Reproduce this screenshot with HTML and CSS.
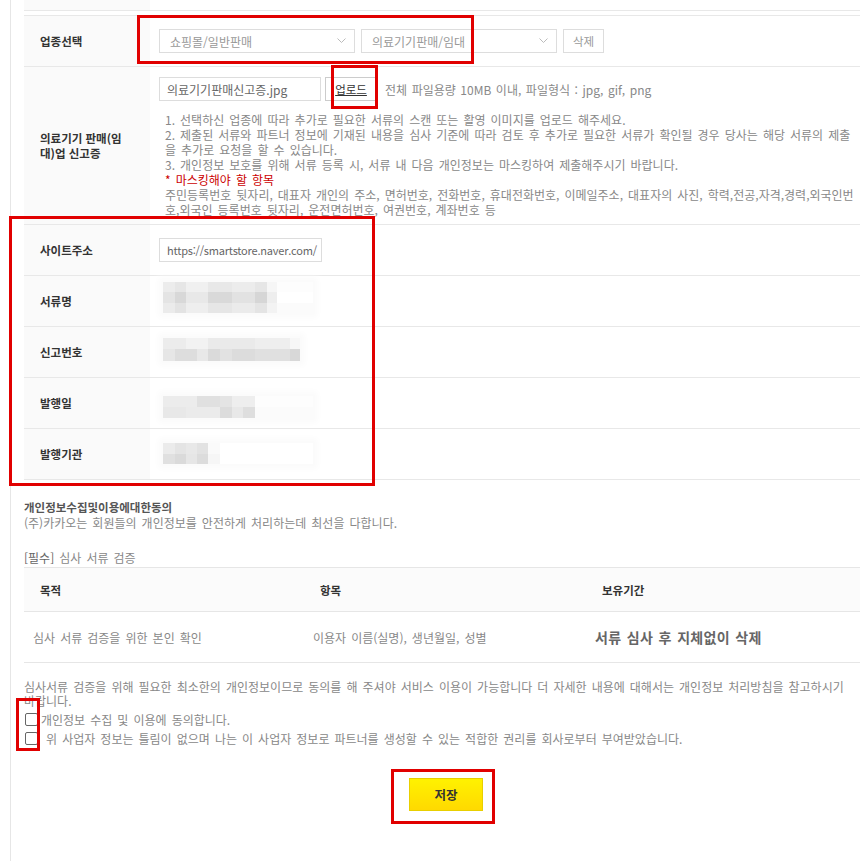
FILE: index.html
```html
<!DOCTYPE html>
<html lang="ko">
<head>
    <meta charset="UTF-8">
    <meta name="viewport" content="width=device-width, initial-scale=1.0">
    <title>서류 등록</title>
    <link rel="stylesheet" href="styles.css">
</head>
<body>
<div class="page">
    <div class="wrap">
        <div class="row row-cut"><div class="th"></div><div class="td"></div></div>

        <div class="form">
            <div class="row">
                <div class="th">업종선택</div>
                <div class="td">
                    <div class="select">
                        <span>쇼핑몰/일반판매</span>
                        <svg width="9" height="6" viewBox="0 0 9 6"><polyline points="0.5,0.5 4.5,4.5 8.5,0.5" fill="none" stroke="#bbb" stroke-width="1"/></svg>
                    </div>
                    <div class="select">
                        <span>의료기기판매/임대</span>
                        <svg width="9" height="6" viewBox="0 0 9 6"><polyline points="0.5,0.5 4.5,4.5 8.5,0.5" fill="none" stroke="#bbb" stroke-width="1"/></svg>
                    </div>
                    <button class="btn btn-del">삭제</button>
                </div>
            </div>

            <div class="row">
                <div class="th">의료기기 판매(임대)업 신고증</div>
                <div class="td td-doc">
                    <div class="file-line">
                        <div class="field field-file">의료기기판매신고증.jpg</div>
                        <button class="btn btn-upload">업로드</button>
                        <span class="hint">전체 파일용량 10MB 이내, 파일형식 : jpg, gif, png</span>
                    </div>
                    <div class="guide">
                        <p>1. 선택하신 업종에 따라 추가로 필요한 서류의 스캔 또는 활영 이미지를 업로드 해주세요.</p>
                        <p>2. 제출된 서류와 파트너 정보에 기재된 내용을 심사 기준에 따라 검토 후 추가로 필요한 서류가 확인될 경우 당사는 해당 서류의 제출을 추가로 요청을 할 수 있습니다.</p>
                        <p>3. 개인정보 보호를 위해 서류 등록 시, 서류 내 다음 개인정보는 마스킹하여 제출해주시기 바랍니다.</p>
                        <p class="warn">* 마스킹해야 할 항목</p>
                        <p>주민등록번호 뒷자리, 대표자 개인의 주소, 면허번호, 전화번호, 휴대전화번호, 이메일주소, 대표자의 사진, 학력,전공,자격,경력,외국인번호,외국인 등록번호 뒷자리, 운전면허번호, 여권번호, 계좌번호 등</p>
                    </div>
                </div>
            </div>

            <div class="row">
                <div class="th">사이트주소</div>
                <div class="td">
                    <div class="field field-url">https://smartstore.naver.com/</div>
                </div>
            </div>

            <div class="row">
                <div class="th">서류명</div>
                <div class="td">
                    <div class="mosaic mz-name">
                        <div class="band b1"></div>
                        <div class="band b2"></div>
                        <div class="band b3"></div>
                    </div>
                </div>
            </div>

            <div class="row">
                <div class="th">신고번호</div>
                <div class="td">
                    <div class="mosaic mz-num">
                        <div class="band b1"></div>
                        <div class="band b2"></div>
                    </div>
                </div>
            </div>

            <div class="row">
                <div class="th">발행일</div>
                <div class="td">
                    <div class="mosaic mz-date">
                        <div class="band b1"></div>
                        <div class="band b2"></div>
                    </div>
                </div>
            </div>

            <div class="row">
                <div class="th">발행기관</div>
                <div class="td">
                    <div class="mosaic mz-org">
                        <div class="band b1"></div>
                        <div class="band b2"></div>
                    </div>
                </div>
            </div>
        </div>

        <div class="consent">
            <p class="consent-title">개인정보수집및이용에대한동의</p>
            <p class="consent-desc">(주)카카오는 회원들의 개인정보를 안전하게 처리하는데 최선을 다합니다.</p>
            <p class="consent-sub"><span>[필수]</span> 심사 서류 검증</p>

            <table class="terms">
                <thead>
                    <tr>
                        <th class="c1">목적</th>
                        <th class="c2">항목</th>
                        <th>보유기간</th>
                    </tr>
                </thead>
                <tbody>
                    <tr>
                        <td>심사 서류 검증을 위한 본인 확인</td>
                        <td>이용자 이름(실명), 생년월일, 성별</td>
                        <td class="keep">서류 심사 후 지체없이 삭제</td>
                    </tr>
                </tbody>
            </table>

            <p class="notice">심사서류 검증을 위해 필요한 최소한의 개인정보이므로 동의를 해 주셔야 서비스 이용이 가능합니다 더 자세한 내용에 대해서는 개인정보 처리방침을 참고하시기 바랍니다.</p>
            <label class="agree"><input type="checkbox">개인정보 수집 및 이용에 동의합니다.</label>
            <label class="agree"><input type="checkbox"> 위 사업자 정보는 틀림이 없으며 나는 이 사업자 정보로 파트너를 생성할 수 있는 적합한 권리를 회사로부터 부여받았습니다.</label>
        </div>

        <div class="actions">
            <button class="btn-save">저장</button>
        </div>
    </div>

    <!-- annotation boxes -->
    <div class="mark mark-type"></div>
    <div class="mark mark-upload"></div>
    <div class="mark mark-info"></div>
    <div class="mark mark-check"></div>
    <div class="mark mark-save"></div>
</div>
</body>
</html>
```

FILE: styles.css
```css
* {
    margin: 0;
    padding: 0;
    box-sizing: border-box;
}

body {
    font-family: "Noto Sans CJK KR", "Noto Sans", sans-serif;
    font-size: 12px;
    word-spacing: 1.7px;
    color: #888;
    background-color: #fff;
    overflow-x: hidden;
}

.page {
    position: relative;
    width: 868px;
    min-height: 861px;
}

.wrap {
    margin-left: 10px;
    width: 858px;
    min-height: 861px;
    border-left: 1px solid #e6e6e6;
    padding-left: 13px;
}

/* form rows */
.row {
    display: flex;
    min-height: 51px;
    border-bottom: 1px solid #e8e8e8;
}

.row-cut {
    min-height: 11px;
    height: 11px;
}

.form {
    margin-top: 4px;
    border-top: 1px solid #e8e8e8;
}

.th {
    flex: none;
    width: 126px;
    padding: 0 16px;
    background-color: #fafafa;
    display: flex;
    align-items: center;
    font-size: 11.5px;
    font-weight: bold;
    color: #333;
    line-height: 15px;
    word-spacing: 0;
}

.td {
    flex: 1;
    display: flex;
    align-items: center;
    gap: 6px;
    padding: 0 12px 0 9px;
}

.select {
    width: 196px;
    height: 24px;
    border: 1px solid #ddd;
    display: flex;
    align-items: center;
    justify-content: space-between;
    padding: 0 8px 0 10px;
    color: #999;
    word-spacing: 0;
}

.btn {
    height: 24px;
    background: #fff;
    border: 1px solid #ddd;
    font-family: inherit;
    font-size: 11.5px;
    color: #999;
    padding: 0 9px;
}

.field {
    height: 24px;
    border: 1px solid #ddd;
    display: flex;
    align-items: center;
    padding: 0 7px;
    color: #666;
    white-space: nowrap;
    overflow: hidden;
}

.field-file {
    width: 162px;
    word-spacing: 0;
}

.field-url {
    width: 163px;
    padding: 0 4px 0 7px;
    font-size: 11px;
    letter-spacing: -0.2px;
    word-spacing: 0;
}

/* document row */
.td-doc {
    display: block;
    padding-top: 10px;
    padding-bottom: 7px;
}

.file-line {
    display: flex;
    align-items: center;
}

.btn-upload {
    margin-left: 4px;
    width: 52px;
    padding: 0;
    border-color: #ccc;
    color: #333;
    text-decoration: underline;
}

.hint {
    margin-left: 8px;
    word-spacing: 1.2px;
}

.guide {
    margin-top: 11px;
    padding-left: 6px;
    line-height: 15px;
}

.guide .warn {
    color: #c00;
}

/* blurred values */
.mosaic {
    margin-left: 4px;
    background-color: #fbfbfb;
    box-shadow: 0 0 6px 5px #fbfbfb;
    filter: blur(0.5px);
}

.band {
    height: 11px;
}

.mz-name {
    width: 150px;
    margin-top: -7px;
}

.mz-name .b1 {
    height: 10px;
    background: linear-gradient(90deg, #ececec 0 12px, #e6e6e6 12px 23px, #f0f0f0 23px 45px, #e8e8e8 45px 69px, #ececec 69px 92px, #e6e6e6 92px 104px, #f6f6f6 104px 114px, #fdfdfd 114px 150px);
}

.mz-name .b2 {
    background: linear-gradient(90deg, #e4e4e4 0 12px, #d8d8d8 12px 23px, #e8e8e8 23px 45px, #d9d9d9 45px 69px, #e2e2e2 69px 92px, #d6d6d6 92px 104px, #eeeeee 104px 114px, #fff 114px 150px);
}

.mz-name .b3 {
    height: 10px;
    background: linear-gradient(90deg, #ebebeb 0 12px, #e3e3e3 12px 23px, #eeeeee 23px 45px, #e6e6e6 45px 69px, #ebebeb 69px 92px, #e4e4e4 92px 104px, #f3f3f3 104px 114px, #fbfbfb 114px 150px);
}

.mz-num {
    width: 137px;
    margin-top: -6px;
}

.mz-num .b1 {
    background: linear-gradient(90deg, #ececec 0 23px, #f2f2f2 23px 45px, #eaeaea 45px 92px, #eeeeee 92px 127px, #f7f7f7 127px 137px);
}

.mz-num .b2 {
    height: 12px;
    background: linear-gradient(90deg, #e6e6e6 0 12px, #dddddd 12px 34px, #e8e8e8 34px 45px, #dadada 45px 57px, #e2e2e2 57px 69px, #dcdcdc 69px 92px, #e0e0e0 92px 127px, #d8d8d8 127px 137px);
}

.mz-date {
    width: 150px;
    margin-top: 7px;
}

.mz-date .b1 {
    background: linear-gradient(90deg, #ececec 0 34px, #e0e0e0 34px 57px, #e4e4e4 57px 69px, #eeeeee 69px 92px, #fdfdfd 92px 150px);
}

.mz-date .b2 {
    background: linear-gradient(90deg, #e8e8e8 0 23px, #ebebeb 23px 57px, #dcdcdc 57px 69px, #e8e8e8 69px 80px, #dedede 80px 92px, #fbfbfb 92px 150px);
}

.mz-org {
    width: 150px;
    margin-top: -2px;
}

.mz-org .b1 {
    background: linear-gradient(90deg, #ebebeb 0 12px, #e4e4e4 12px 23px, #e8e8e8 23px 34px, #e2e2e2 34px 45px, #fafafa 45px 57px, #fff 57px 150px);
}

.mz-org .b2 {
    height: 10px;
    background: linear-gradient(90deg, #e0e0e0 0 12px, #dadada 12px 23px, #e6e6e6 23px 34px, #dcdcdc 34px 45px, #f6f6f6 45px 57px, #fff 57px 150px);
}

/* consent */
.consent-title {
    margin-top: 19px;
    line-height: 16px;
    font-size: 11.5px;
    font-weight: bold;
    color: #555;
    word-spacing: 0;
}

.consent-desc {
    line-height: 16px;
}

.consent-sub {
    margin-top: 19px;
    margin-bottom: 1px;
    line-height: 16px;
    color: #888;
}

.consent-sub span {
    color: #666;
}

.terms {
    width: 100%;
    border-collapse: collapse;
    border-top: 1px solid #e6e6e6;
    text-align: left;
}

.terms th {
    height: 44px;
    padding-left: 16px;
    background-color: #fbfbfb;
    border-bottom: 1px solid #e6e6e6;
    font-size: 11.5px;
    color: #333;
    font-weight: bold;
}

.terms th.c1 {
    width: 280px;
}

.terms th.c2 {
    width: 282px;
}

.terms td {
    height: 51px;
    padding-left: 9px;
    border-bottom: 1px solid #e6e6e6;
    color: #888;
}

.terms td.keep {
    font-size: 14px;
    font-weight: bold;
    color: #666;
    letter-spacing: 0.3px;
    word-spacing: 1.2px;
}

.notice {
    margin-top: 17px;
    padding-right: 14px;
    line-height: 14px;
}

.agree {
    display: flex;
    align-items: center;
    line-height: 19px;
    white-space: pre;
}

.agree:first-of-type {
    margin-top: 2px;
}

.agree input {
    appearance: none;
    width: 13px;
    height: 13px;
    margin: 0 3px 0 1px;
    border: 1px solid #666;
    border-radius: 2px;
    background: #fff;
}

.actions {
    margin-top: 30px;
    text-align: center;
}

.btn-save {
    width: 74px;
    height: 33px;
    border: 1px solid #e8cf00;
    background: linear-gradient(#fff200, #ffd900);
    font-family: inherit;
    font-size: 12.5px;
    font-weight: bold;
    color: #333;
}

/* red annotation boxes */
.mark {
    position: absolute;
    border: 3px solid #e10000;
}

.mark-type {
    left: 137px;
    top: 15px;
    width: 337px;
    height: 49px;
}

.mark-upload {
    left: 331px;
    top: 65px;
    width: 47px;
    height: 44px;
}

.mark-info {
    left: 9px;
    top: 216px;
    width: 366px;
    height: 270px;
}

.mark-check {
    left: 16px;
    top: 698px;
    width: 24px;
    height: 53px;
}

.mark-save {
    left: 391px;
    top: 769px;
    width: 104px;
    height: 55px;
}
```
